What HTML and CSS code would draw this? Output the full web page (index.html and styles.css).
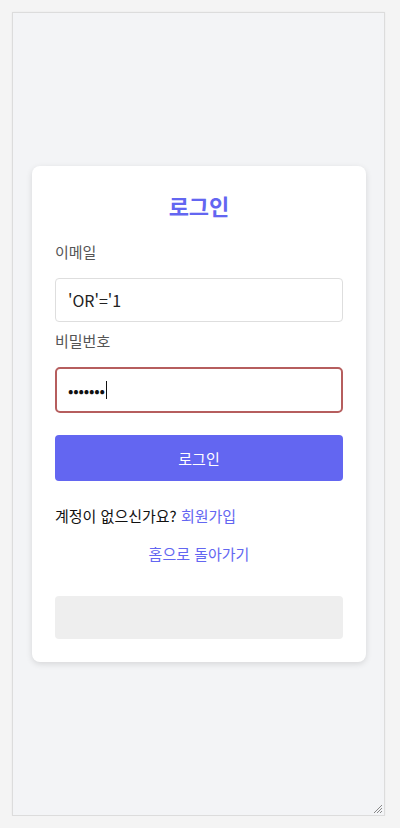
FILE: index.html
```html
<!DOCTYPE html>
<html lang="ko">
<head>
<meta charset="utf-8">
<title>로그인</title>
<link rel="stylesheet" href="styles.css">
</head>
<body>
<div class="frame">
  <div class="card">
    <h2 class="title">로그인</h2>
    <div class="group">
      <label class="label">이메일</label>
      <div class="input">'OR'='1</div>
    </div>
    <div class="group">
      <label class="label">비밀번호</label>
      <div class="input focused"><span class="dots">•••••••</span><span class="caret"></span></div>
    </div>
    <button class="btn">로그인</button>
    <p class="signup">계정이 없으신가요? <a class="link">회원가입</a></p>
    <p class="home"><a class="link">홈으로 돌아가기</a></p>
    <div class="placeholder"></div>
  </div>
  <svg class="grip" width="12" height="12" viewBox="0 0 12 12">
    <path d="M11 3 L3 11 M11 6 L6 11 M11 9 L9 11" stroke="#888" stroke-width="1" fill="none"/>
  </svg>
</div>
</body>
</html>
```
FILE: styles.css
```css
html, body {
  margin: 0;
  padding: 0;
  background: #f4f4f4;
  font-family: "Noto Sans CJK KR", "Noto Sans", sans-serif;
}
.frame {
  position: relative;
  box-sizing: border-box;
  width: 373px;
  height: 804px;
  margin: 12px 0 0 12px;
  border: 1px solid #dcdcdc;
  background: #f3f4f6;
  box-shadow: 0 0 2px rgba(0,0,0,0.05);
  display: flex;
  align-items: center;
  justify-content: center;
}
.card {
  box-sizing: border-box;
  width: 334px;
  background: #fff;
  border-radius: 8px;
  padding: 22px 23px 23px;
  box-shadow: 0 2px 6px rgba(0,0,0,0.12);
  margin-left: 1px;
}
.title {
  margin: 0 0 19px;
  text-align: center;
  font-size: 22px;
  line-height: 34px;
  font-weight: 700;
  color: #6366f1;
}
.group {
  margin-bottom: 8px;
}
.label {
  display: block;
  font-size: 15px;
  line-height: 22px;
  color: #555;
  margin-bottom: 15px;
}
.input {
  box-sizing: border-box;
  height: 44px;
  border: 1px solid #dedede;
  border-radius: 4px;
  padding: 0 12px;
  font-size: 16px;
  line-height: 42px;
  color: #222;
  display: flex;
  align-items: center;
}
.input.focused {
  height: 46px;
  border: 2px solid #b65e5e;
  border-radius: 5px;
  padding: 0 11px;
}
.dots {
  font-size: 16px;
  letter-spacing: -0.2px;
  color: #111;
}
.caret {
  display: inline-block;
  width: 1px;
  height: 18px;
  background: #111;
  margin-left: 1px;
}
.btn {
  display: block;
  width: 100%;
  height: 46px;
  margin-top: 22px;
  border: none;
  border-radius: 4px;
  background: #6366f1;
  color: #fff;
  font-family: inherit;
  font-size: 15px;
}
.signup {
  margin: 24px 0 0;
  font-size: 15px;
  line-height: 22px;
  color: #111;
}
.link {
  color: #6366f1;
  text-decoration: none;
}
.home {
  margin: 16px 0 0;
  text-align: center;
  font-size: 15px;
  line-height: 22px;
}
.placeholder {
  margin-top: 31px;
  height: 43px;
  border-radius: 4px;
  background: #eeeeee;
}
.grip {
  position: absolute;
  right: 1px;
  bottom: 1px;
}
```
